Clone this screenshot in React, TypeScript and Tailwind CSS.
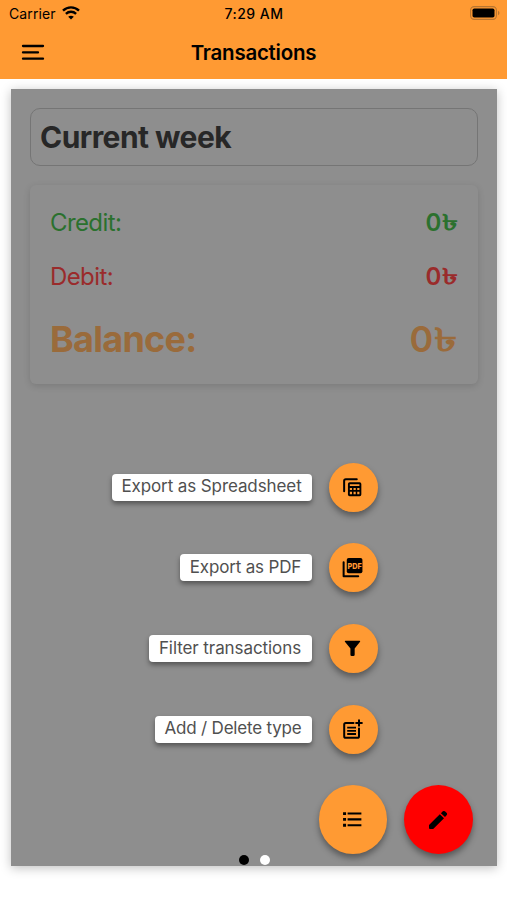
import type { ComponentType } from "react"

const SheetsIcon = () => (
  <svg width="19" height="19" viewBox="0 0 20 20" fill="none" stroke="#000">
    <path d="M1.2 14V3Q1.2 1.2 3 1.2H14.5" strokeWidth="2.1" strokeLinecap="round" />
    <path
      d="M7 4.5H17.5Q19.3 4.5 19.3 6.3V17.4Q19.3 19.2 17.5 19.2H7Q5.2 19.2 5.2 17.4V6.3Q5.2 4.5 7 4.5ZM7.2 6.5V8.4H17.3V6.5ZM7.2 10.4V12.7H9.5V10.4ZM11.1 10.4V12.7H13.4V10.4ZM15 10.4V12.7H17.3V10.4ZM7.2 14.4V17.1H9.5V14.4ZM11.1 14.4V17.1H13.4V14.4ZM15 14.4V17.1H17.3V14.4Z"
      fill="#000"
      fillRule="evenodd"
      stroke="none"
    />
  </svg>
)

const PdfIcon = () => (
  <svg width="21" height="21" viewBox="0 0 22 22" fill="none">
    <path d="M1.7 5.5V20.2H17" stroke="#000" strokeWidth="2.1" strokeLinecap="round" strokeLinejoin="round" />
    <rect x="5" y="1" width="16.4" height="16" rx="2" fill="#000" />
    <text x="13.2" y="12.3" fill="#ff9a33" fontSize="8.6" fontWeight="800" textAnchor="middle" textLength="15" lengthAdjust="spacingAndGlyphs">
      PDF
    </text>
  </svg>
)

const FilterIcon = () => (
  <svg width="17" height="17" viewBox="0 0 18 18">
    <path d="M1.6.8H16.4Q17.6.8 17 1.9L11.3 9V15.6Q11.3 17 9.9 17H8.1Q6.8 17 6.8 15.6V9L1 1.9Q.4.8 1.6.8Z" />
  </svg>
)

const AddTypeIcon = () => (
  <svg width="20" height="20" viewBox="0 0 20 20" fill="none" stroke="#000" strokeWidth="2">
    <path d="M10.5 4H2.8Q1.2 4 1.2 5.6V17.2Q1.2 18.8 2.8 18.8H14.4Q16 18.8 16 17.2V9.5" strokeLinecap="round" />
    <path d="M4.2 8.6h8.8M4.2 11.8h8.8M4.2 15h8.8" strokeWidth="1.8" />
    <path d="M16 .4v7.2M12.4 4h7.2" />
  </svg>
)

const ListIcon = () => (
  <svg width="19" height="17" viewBox="0 0 20 18">
    <path d="M0 1.2h3.2v3H0zM0 7.4h3.2v3H0zM0 13.6h3.2v3H0zM4.8 1.6h14.6v2.2H4.8zM4.8 7.8h14.6V10H4.8zM4.8 14h14.6v2.2H4.8z" />
  </svg>
)

const PencilIcon = () => (
  <svg width="20" height="20" viewBox="0 0 20 20">
    <path d="M1 15 11.8 4.2 16 8.2 5.2 19H2Q1 19 1 18ZM12.9 3.2 14.8 1.3Q15.9.5 16.9 1.3L18.8 3.1Q19.5 4.1 18.8 5.1L17 7Z" />
  </svg>
)

const actions: { label: string; width: string; icon: ComponentType }[] = [
  { label: "Export as Spreadsheet", width: "w-[200px] tracking-[-0.1px]", icon: SheetsIcon },
  { label: "Export as PDF", width: "w-[132px] tracking-[-0.17px]", icon: PdfIcon },
  { label: "Filter transactions", width: "w-[163px] tracking-[-0.08px]", icon: FilterIcon },
  { label: "Add / Delete type", width: "w-[157px] tracking-[-0.2px]", icon: AddTypeIcon },
]

const StatusBar = () => (
  <div className="grid h-7 grid-cols-3 items-center pl-[9px] pr-[7px] text-[14px]">
    <div className="-mt-0.5 flex items-center gap-1.5">
      <span className="tracking-[0.1px]">Carrier</span>
      <svg width="18" height="14" viewBox="0 0 18 14" fill="none" stroke="#000" strokeWidth="2.4">
        <path d="M1 4.6C5.5.3 12.5.3 17 4.6" />
        <path d="M3.9 7.8c2.9-2.7 7.3-2.7 10.2 0" />
        <path d="M9 13.6 6.2 10.7c1.6-1.4 4-1.4 5.6 0Z" fill="#000" stroke="none" />
      </svg>
    </div>
    <span className="-mt-0.5 pr-px text-center font-medium tracking-[0.45px]">7:29 AM</span>
    <svg className="-mt-0.5 justify-self-end" width="30" height="14" viewBox="0 0 30 14">
      <rect x=".6" y=".6" width="25.8" height="12.8" rx="3.6" fill="none" stroke="#b87530" strokeWidth="1.1" />
      <rect x="2.5" y="2.5" width="22" height="9" rx="1.8" fill="#000" />
      <path d="M28 4.8c2 .8 2 3.6 0 4.4Z" fill="#b87530" />
    </svg>
  </div>
)

const Header = () => (
  <header className="h-[79px] bg-[#ff9a33] text-black">
    <StatusBar />
    <div className="grid h-[49px] grid-cols-[80px_1fr_80px] items-center">
      <button aria-label="Open menu" className="pl-[21px]">
        <svg width="24" height="18" viewBox="0 0 24 18" stroke="#000" strokeWidth="2.3" strokeLinecap="round">
          <path d="M2 2h20M2 8.4h15M2 14.7h20" />
        </svg>
      </button>
      <h1 className="pt-px text-center text-[20.5px] font-semibold tracking-[-0.25px]">Transactions</h1>
    </div>
  </header>
)

// The fallback taka sign is narrow and tall, so it is widened to sit level with the digit
const Amount = ({ value }: { value: number }) => (
  <span className="flex items-baseline font-semibold">
    {value}
    <span className="ml-[0.19em] inline-block origin-[100%_48%] scale-x-[1.32] scale-y-[0.9]">৳</span>
  </span>
)

const Summary = () => (
  <section className="mt-[19px] flex h-[199px] flex-col rounded-md px-5 pt-[11px] shadow-[0_2px_7px_rgba(0,0,0,0.14)]">
    <div className="flex h-[54px] items-center justify-between text-2xl text-[#2b712e]">
      <span className="tracking-[-0.6px]">Credit:</span>
      <Amount value={0} />
    </div>
    <div className="flex h-[54px] items-center justify-between text-2xl text-[#9a2b2b]">
      <span className="tracking-[-0.6px]">Debit:</span>
      <Amount value={0} />
    </div>
    <div className="flex h-[70px] items-center justify-between text-[36px] font-bold text-[#9a6b3b]">
      <span className="tracking-[-0.75px]">Balance:</span>
      <Amount value={0} />
    </div>
  </section>
)

const fabShadow = "shadow-[0_4px_6px_rgba(0,0,0,0.38)]"

const Actions = () => (
  <div className="mt-[78.5px] flex flex-col">
    {actions.map(({ label, width, icon: Icon }) => (
      <div key={label} className="mb-[31.7px] mr-[100.5px] flex h-[49px] items-center justify-end gap-[17px]">
        <span className={`flex h-[27px] items-center justify-center rounded bg-white text-[17px] whitespace-nowrap text-[#505050] shadow-[0_3px_5px_rgba(0,0,0,0.4)] ${width}`}>
          {label}
        </span>
        <button aria-label={label} className={`flex size-[49px] items-center justify-center rounded-full bg-[#ff9a33] pr-px text-black ${fabShadow}`}>
          <Icon />
        </button>
      </div>
    ))}
    <div className="mr-[5.5px] flex justify-end gap-[17px]">
      <button aria-label="Options" className={`flex size-[68.5px] items-center justify-center rounded-full bg-[#ff9a33] text-black ${fabShadow}`}>
        <ListIcon />
      </button>
      <button aria-label="Edit" className={`flex size-[68.5px] items-center justify-center rounded-full bg-[#ff0000] text-black ${fabShadow}`}>
        <PencilIcon />
      </button>
    </div>
  </div>
)

export default function App() {
  return (
    <div className="h-[900px] w-[507px] overflow-hidden bg-white font-['Inter','Noto_Sans',sans-serif]">
      <Header />
      <main className="ml-[11px] mt-2.5 flex h-[777px] w-[486px] flex-col bg-[#8e8e8e] px-[19px] pt-[19px] shadow-[0_2px_10px_rgba(0,0,0,0.25)]">
        <div className="flex h-[58px] shrink-0 items-center rounded-[10px] border border-[#757575] px-[9px] pt-px text-[30px] font-bold tracking-[-0.55px] text-[#272727]">
          Current week
        </div>
        <Summary />
        <Actions />
        <div className="mt-px flex justify-center gap-[11px]">
          <span className="size-2.5 rounded-full bg-black" />
          <span className="size-2.5 rounded-full bg-white" />
        </div>
      </main>
    </div>
  )
}
